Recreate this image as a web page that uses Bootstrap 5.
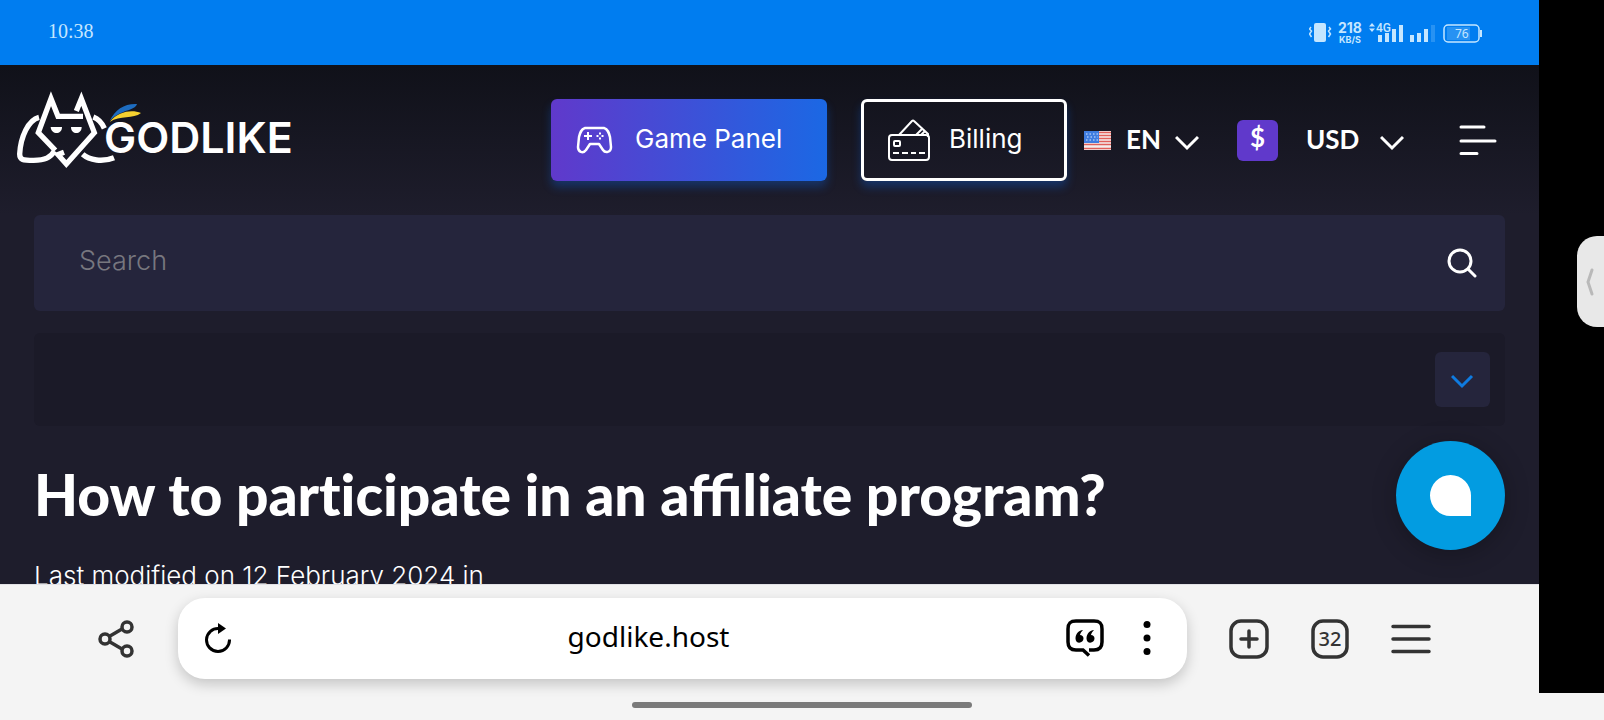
<!DOCTYPE html>
<html lang="en" data-bs-theme="light">
<head>
<meta charset="utf-8">
<meta name="viewport" content="width=device-width, initial-scale=1">
<title>How to participate in an affiliate program?</title>
<link rel="stylesheet" href="https://cdn.jsdelivr.net/npm/bootstrap@5.3.0/dist/css/bootstrap.min.css">
<style>
  :root { --violet: #6039cb; --night: #1e1d2c; --field: #25253c; --chrome: #f4f4f4; --ink: #333; }
  body { font-family: Lato, "Liberation Sans", sans-serif; background: var(--chrome); }
  svg { display: block; flex-shrink: 0; }
  .stage, .screen { min-width: 0; min-height: 0; }
  .cutout { width: 65px; background: #000; }
  .edge-handle { position: absolute; top: 236px; right: 0; width: 27px; height: 91px; background: #e8e8e8; border: 0; border-radius: 20px 0 0 20px; }
  .status { height: 65px; padding: 0 56px 2px 48px; background: #007df0; color: #c5e6ff; }
  .clock { font: 20px "Liberation Serif", serif; }
  .site { background: linear-gradient(#101119, var(--night) 150px); color: #fff; }
  .site-header { height: 150px; padding: 0 42px 0 17px; }
  .cta { height: 82px; border-radius: 6px; border: 3px solid #fff; color: #fff; font: 26px Inter, sans-serif; box-shadow: 0 6px 10px #0d6efd4d; }
  .cta:hover { color: #fff; }
  .cta span { padding-bottom: 4px; }
  .cta-panel { width: 276px; padding: 0 22px; gap: 22px; border-color: transparent; background: linear-gradient(90deg, #6039cb, #1b68e4) border-box; }
  .cta-billing { width: 206px; margin-left: 34px; padding: 0 24px; gap: 19px; }
  .picker-lang { margin-left: 17px; gap: 15px; }
  .picker-cur { margin-left: 38px; gap: 28px; }
  .picker { appearance: none; background: transparent url("data:image/svg+xml,%3Csvg xmlns='http://www.w3.org/2000/svg' width='24' height='24'%3E%3Cpath d='M1 8l11 11 11-11' fill='none' stroke='white' stroke-width='3'/%3E%3C/svg%3E") no-repeat right 9px; border: 0; color: #fff; font-size: 26px; font-weight: 700; height: 41px; padding: 0 0 10px; }
  .picker option { color: #000; }
  .picker-lang .picker { width: 73px; }
  .picker-cur .picker { width: 98px; }
  .coin { width: 41px; height: 41px; border-radius: 6px; background: var(--violet); font-size: 26px; font-weight: 700; line-height: 34px; }
  .burger { margin-left: 55px; }
  .content { padding: 0 34px; }
  .search { height: 96px; padding: 0 28px 0 45px; border-radius: 6px; background: var(--field); }
  .search input { height: 40px; font: 300 27px Inter, sans-serif; color: #fff; }
  .search input::placeholder { color: #77777f; }
  .search-field { padding-bottom: 6px; }
  .toc { height: 93px; margin-top: 22px; padding-right: 15px; border-radius: 6px; background: #1b1a28; }
  .toc button { width: 55px; height: 55px; border-radius: 6px; background: var(--field); }
  .title { font-size: 57px; font-weight: 900; line-height: 60px; margin: 38px 0 32px; }
  .plain { font-variant-ligatures: none; }
  .meta { font: 300 26px/40px Inter, sans-serif; }
  .chat { position: absolute; right: 34px; bottom: 34px; width: 109px; height: 109px; border-radius: 50%; border: 0; background: #029ce1; box-shadow: 0 4px 24px #0004; }
  .toolbar { height: 109px; padding: 0 108px 0 98px; gap: 42px; color: var(--ink); border-top: 1px solid #e2e2e6; }
  .url { height: 81px; margin-bottom: 2px; padding: 0 36px 0 27px; border-radius: 27px; background: #fff; color: #000; box-shadow: 0 5px 14px #0003; }
  .url input { font: 28px/40px "Noto Sans", sans-serif; height: 40px; padding: 0 0 4px; color: #000; }
  .dots { margin-left: 39px; }
  .home { height: 27px; padding-bottom: 4px; }
  .home div { width: 340px; height: 6px; border-radius: 3px; background: #7a7a7a; }
  input:focus { outline: 0; }
</style>
</head>
<body class="vh-100 d-flex flex-column overflow-hidden">
<div class="stage d-flex flex-grow-1 position-relative">
  <div class="screen d-flex flex-column flex-grow-1">
    <div class="status d-flex align-items-center justify-content-between flex-shrink-0">
      <span class="clock">10:38</span>
      <svg width="174" height="30" viewBox="0 0 174 30" fill="currentColor">
        <rect x="5" y="6" width="12" height="19" rx="2"/>
        <path d="M2 10l-1.500 2 2 2-2 3 2 3M20 10l1.500 2-2 2 2 3-2 3" fill="none" stroke="currentColor" stroke-width="1.500"/>
        <text x="29" y="16" font-family="Inter" font-weight="700" font-size="14">218</text>
        <text x="30" y="26" font-family="Inter" font-weight="700" font-size="9">KB/S</text>
        <path d="M60 9.500l3-3.500 3 3.500zM60 11.500l3 3.500 3-3.500z"/>
        <text x="67" y="15" font-family="Roboto" font-weight="500" font-size="12">4G</text>
        <rect x="69" y="18" width="4" height="7"/><rect x="76" y="16" width="4" height="9"/><rect x="83" y="12" width="4" height="13"/><rect x="90" y="8" width="4" height="17"/>
        <rect x="101" y="18" width="4" height="7"/><rect x="108" y="16" width="4" height="9"/><rect x="115" y="12" width="4" height="13"/><rect x="122" y="8" width="4" height="17" opacity=".2"/>
        <rect x="138" y="10" width="23" height="13" opacity=".2"/>
        <rect x="135" y="8" width="35" height="17" rx="4" fill="none" stroke="currentColor" stroke-width="1.500"/><rect x="171" y="13" width="2" height="7"/>
        <text x="146" y="21" font-family="Noto Sans" font-size="12">76</text>
      </svg>
    </div>

    <main class="site flex-grow-1 position-relative overflow-hidden">
      <header class="site-header d-flex align-items-center">
        <a href="#" class="d-block" aria-label="Godlike home">
          <svg width="284" height="100" viewBox="51 90 852 300" fill="none" stroke="#fff" stroke-width="16" stroke-miterlimit="10">
            <path d="M166 271L115 218 153 116 174 169H249"/>
            <path d="M229 153L244 116 283 218 199 312 174 284 192 277"/>
            <path d="M117 172C85 180 62 230 59 282c0 18 10 19 42 19 34 0 51-8 62-28"/>
            <path d="M280 171c16 6 25 16 33 34M248 283c20 18 60 24 94 10"/>
            <path d="M152 201h34c0 24-32 24-34 0zM213 201h32c0 24-32 24-32 0z" fill="#fff" stroke="none"/>
            <path d="M329 183C345 148 375 130 411 132 405 154 360 148 329 183z" fill="#1d6cc0" stroke="none"/>
            <path d="M329 186C355 154 395 148 423 159 400 178 360 165 329 186z" fill="#f5d130" stroke="none"/>
            <text x="312" y="280" fill="#fff" stroke="none" font-family="Inter" font-weight="600" font-size="129">GODLIKE</text>
          </svg>
        </a>
        <a href="#" class="cta cta-panel btn d-flex align-items-center ms-auto">
          <svg width="37" height="28" viewBox="0 0 37 28" fill="none" stroke="#fff" stroke-linejoin="round"><path d="M9 2h19c4 1 5 5 6 9l1 10c0 6-6 6-8 3l-4-6h-9l-4 6c-3 4-8 2-8-3l1-10c1-4 2-8 6-9z" stroke-width="2.500"/><path d="M8 10h8M12 6v8" stroke-width="2"/><path d="M24 6.500v2M24 11.500v2M20.500 10h2M25.500 10h2" stroke-width="2"/></svg>
          <span>Game Panel</span>
        </a>
        <a href="#" class="cta cta-billing btn d-flex align-items-center">
          <svg width="42" height="42" viewBox="0 0 42 42" fill="none" stroke="#fff" stroke-width="2"><rect x="1" y="16" width="40" height="25" rx="3"/><path d="M11 16L24 2q1-1 2 0l14 13v3M28 16l7-7M33 16l4-4"/><rect x="6" y="22" width="6" height="5" rx="1"/><path d="M5 34h6M14 34h6M23 34h5M31 34h6"/></svg>
          <span>Billing</span>
        </a>
        <label class="picker-lang d-flex align-items-center">
          <svg width="27" height="19" viewBox="0 0 27 19"><path fill="#f4eeee" d="M0 0h27v19H0z"/><path d="M0 1.500h27M0 4.500h27M0 7.500h27M0 10.500h27M0 13.500h27M0 17.500h27" stroke="#e0605a" stroke-width="1.700"/><path fill="#3f7de0" d="M0 0h15v12H0z"/><path d="M2 3h12M3 6h11M2 9h12" stroke="#dbe8ff" stroke-dasharray="1.500 2"/></svg>
          <select class="picker" aria-label="Language"><option>EN</option></select>
        </label>
        <label class="picker-cur d-flex align-items-center">
          <span class="coin text-center">$</span>
          <select class="picker" aria-label="Currency"><option>USD</option></select>
        </label>
        <button class="burger btn p-0 border-0" aria-label="Menu">
          <svg width="38" height="30" viewBox="0 0 38 30" stroke="#fff" stroke-width="3" stroke-linecap="round"><path d="M2 2h23M2 16h34M2 28.500h16"/></svg>
        </button>
      </header>

      <div class="content">
        <form class="search d-flex align-items-center">
          <div class="search-field flex-grow-1"><input type="search" class="w-100 border-0 bg-transparent p-0" placeholder="Search" aria-label="Search"></div>
          <button type="button" class="btn p-0 border-0" aria-label="Search"><svg width="30" height="30" viewBox="0 0 30 30" fill="none" stroke="#fff" stroke-width="3" stroke-linecap="round"><circle cx="13" cy="13" r="11"/><path d="M21 21l7 7"/></svg></button>
        </form>
        <div class="toc d-flex align-items-center justify-content-end">
          <button class="btn p-0 border-0 d-flex align-items-center justify-content-center" aria-label="Expand"><svg width="24" height="18" viewBox="0 0 24 18" fill="none" stroke="#0f7be0" stroke-width="3"><path d="M1 5l10 10L21 5"/></svg></button>
        </div>
        <h1 class="title">How to <span class="plain">participate</span> in an affiliate program?</h1>
        <p class="meta mb-0">Last modified on 12 February 2024 in</p>
      </div>
      <button class="chat d-flex align-items-center justify-content-center" aria-label="Chat">
        <svg width="41" height="41" viewBox="0 0 41 41"><path fill="#fff" d="M20.500 0A20.500 20.500 0 0 1 41 20.500V41H20.500a20.500 20.500 0 0 1 0-41z"/></svg>
      </button>
    </main>

    <nav class="toolbar d-flex align-items-center flex-shrink-0">
      <button class="btn p-0 border-0" aria-label="Share"><svg width="38" height="38" viewBox="0 0 38 38" fill="none" stroke="#333" stroke-width="3.500"><circle cx="7" cy="19" r="5"/><circle cx="29" cy="7" r="5"/><circle cx="29" cy="31" r="5"/><path d="M12 16l12-7M12 22l12 7"/></svg></button>
      <div class="url d-flex align-items-center flex-grow-1">
        <button class="btn p-0 border-0" aria-label="Reload"><svg width="26" height="30" viewBox="0 0 26 30" fill="none" stroke="#000" stroke-width="3"><path d="M14 5.500a11.500 11.500 0 1 0 10.500 11"/><path d="M13 0l8 5.500-8 5.500z" fill="#000" stroke="none"/></svg></button>
        <input type="text" class="flex-grow-1 border-0 bg-transparent text-center" value="godlike.host" aria-label="Address">
        <button class="btn p-0 border-0" aria-label="Quote"><svg width="38" height="38" viewBox="0 0 38 38" fill="none" stroke="#000" stroke-width="3.500"><path d="M23 31h5c6 0 8-3 8-8V10c0-6-2-8-8-8H10c-6 0-8 2-8 8v13c0 5 2 8 8 8h7l6 5.500"/><path d="M17 11c-4 0-7.500 4-7.500 8.500 0 6 8 5 8 0 0-2-1.500-3.500-3.500-3.500.5-2 1.500-3.500 3-5zM28 11c-4 0-7.500 4-7.500 8.500 0 6 8 5 8 0 0-2-1.500-3.500-3.500-3.500.5-2 1.500-3.500 3-5z" fill="#000" stroke="none"/></svg></button>
        <button class="dots btn p-0 border-0" aria-label="More"><svg width="8" height="36" viewBox="0 0 8 36"><circle cx="4" cy="4.500" r="3.500"/><circle cx="4" cy="18" r="3.500"/><circle cx="4" cy="31.500" r="3.500"/></svg></button>
      </div>
      <button class="btn p-0 border-0" aria-label="New tab"><svg width="40" height="40" viewBox="0 0 40 40" fill="none" stroke="#333" stroke-width="3.500"><rect x="2" y="2" width="36" height="36" rx="10"/><path d="M20 12v16M12 20h16" stroke-linecap="round"/></svg></button>
      <button class="btn p-0 border-0" aria-label="Tabs"><svg width="38" height="40" viewBox="0 0 38 40" fill="none" stroke="#333" stroke-width="3.500"><rect x="2" y="2" width="34" height="36" rx="10"/><text x="19" y="27" text-anchor="middle" fill="#333" stroke="none" font-family="Noto Sans" font-weight="500" font-size="20">32</text></svg></button>
      <button class="btn p-0 border-0" aria-label="Menu"><svg width="40" height="30" viewBox="0 0 40 30" stroke="#333" stroke-width="3.500" stroke-linecap="round"><path d="M2 2.500h36M2 15h36M2 27.500h36"/></svg></button>
    </nav>
  </div>
  <div class="cutout flex-shrink-0"></div>
  <button class="edge-handle p-0" aria-label="Open side panel"><svg width="27" height="28" viewBox="0 0 27 28" fill="none" stroke="#b9b9b9" stroke-width="3" stroke-linecap="round"><path d="M15 2l-4 12 4 12"/></svg></button>
</div>
<div class="home d-flex justify-content-center align-items-center flex-shrink-0"><div></div></div>
<script src="https://cdn.jsdelivr.net/npm/bootstrap@5.3.0/dist/js/bootstrap.bundle.min.js"></script>
</body>
</html>
